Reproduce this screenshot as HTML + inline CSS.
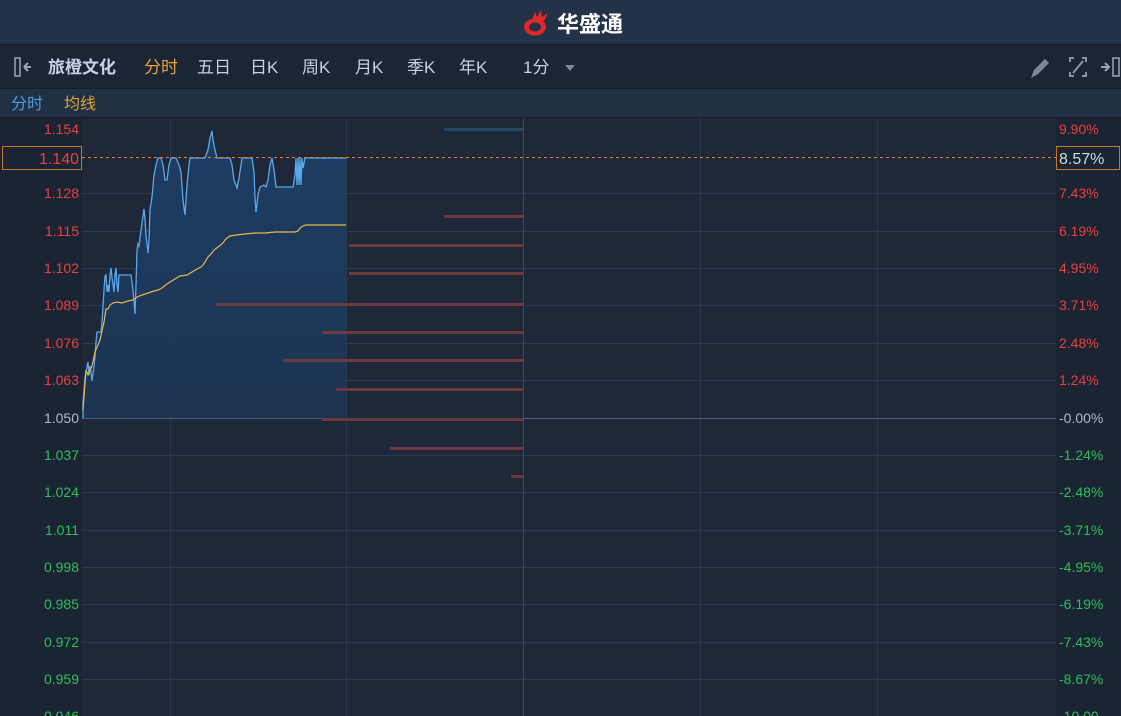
<!DOCTYPE html>
<html><head><meta charset="utf-8"><style>
body{margin:0;width:1121px;height:716px;overflow:hidden;background:#1e2838;font-family:"Liberation Sans","Noto Sans CJK SC",sans-serif;}
</style></head><body>
<svg width="1121" height="716" xmlns="http://www.w3.org/2000/svg" style="position:absolute;left:0;top:0">
<defs><linearGradient id="g" x1="0" y1="0" x2="0" y2="1"><stop offset="0" stop-color="#1d4068"/><stop offset="1" stop-color="#1d3554"/></linearGradient></defs>
<rect x="0" y="0" width="1121" height="44" fill="#243248"/>
<rect x="0" y="44" width="1121" height="1" fill="#151d29"/>
<rect x="0" y="45" width="1121" height="43" fill="#1b2535"/>
<rect x="0" y="88" width="1121" height="1" fill="#151d29"/>
<rect x="0" y="89" width="1121" height="28" fill="#223044"/>
<rect x="0" y="117" width="1121" height="1" fill="#151d29"/>
<rect x="0" y="118" width="82" height="598" fill="#1b2433"/>
<rect x="82" y="118" width="974" height="598" fill="#1e2838"/>
<rect x="1056" y="118" width="65" height="598" fill="#1b2433"/>
<!-- logo -->
<g transform="translate(523,9)">
<path d="M1 18 A11 8.5 0 1 0 23 18 A11 8.5 0 1 0 1 18 Z M6 18 A6 4.5 0 1 1 18 18 A6 4.5 0 1 1 6 18Z" fill="#e0282a" fill-rule="evenodd"/>
<path d="M9 11 L12 3 L14 8 L18 1 L19 8 L25 4 L21 12Z" fill="#e0282a"/>
</g>
<text x="557" y="32" fill="#fff" font-size="22" font-weight="bold">华盛通</text>
<!-- toolbar -->
<rect x="15" y="58" width="5" height="18" fill="none" stroke="#9aa6b6" stroke-width="1.5"/>
<path d="M24 67 L31 67 M24 67 L28 63 M24 67 L28 71" stroke="#9aa6b6" stroke-width="2" fill="none"/>
<g font-size="17" fill="#c8d2e0">
<text x="48" y="73" font-weight="bold" fill="#c6d3e6">旅橙文化</text>
<text x="144" y="73" fill="#e8a33a">分时</text>
<text x="197" y="73">五日</text>
<text x="250" y="73">日K</text>
<text x="302" y="73">周K</text>
<text x="355" y="73">月K</text>
<text x="407" y="73">季K</text>
<text x="459" y="73">年K</text>
<text x="523" y="73">1分</text>
</g>
<path d="M565 65 L575 65 L570 71Z" fill="#7d8898"/>
<path d="M1031 78 L1034 70 L1045 59 L1049 63 L1038 74Z" fill="#7d8898"/>
<g stroke="#8894a4" stroke-width="2" fill="none">
<path d="M1070 62 v-4 h4 M1082 58 h4 v4 M1086 72 v4 h-4 M1074 76 h-4 v-4 M1073 73 L1083 61"/>
</g>
<path d="M1101 67 h7 M1105 63 l4 4 l-4 4" stroke="#9aa6b6" stroke-width="2" fill="none"/>
<rect x="1113" y="58" width="6" height="18" fill="none" stroke="#9aa6b6" stroke-width="1.5"/>
<text x="11" y="109" font-size="16" fill="#4a9de0">分时</text>
<text x="64" y="109" font-size="16" fill="#e0a23a">均线</text>
<!-- grid -->
<g stroke="#2b3a50" stroke-width="1">
<path d="M82 193.5H1056 M82 231.5H1056 M82 268.5H1056 M82 305.5H1056 M82 343.5H1056 M82 380.5H1056 M82 455.5H1056 M82 492.5H1056 M82 530.5H1056 M82 567.5H1056 M82 604.5H1056 M82 642.5H1056 M82 679.5H1056"/>
<path d="M170.5 118V716 M346.5 118V716 M700.5 118V716 M877.5 118V716"/>
</g>
<path d="M523.5 118V716" stroke="#3a4a62"/>
<path d="M82 418.5H1056" stroke="#4a6080"/>
<!-- area -->
<polygon fill="url(#g)" fill-opacity="0.9" points="83,418 83,403 85,378 86,372 88,362 89,375 90,366 91,372 92,381 94,366 95,357 96,342 97,332 101,332 102,322 103,306 104,290 105,276 106,275 107,292 108,285 109,292 110,275 111,268 112,278 113,284 114,292 115,275 116,268 117,285 118,292 119,275 131,275 133,290 134,302 135,314 136,285 137,250 138,244 139,246 140,238 142,223 144,209 145,219 146,236 148,253 149,240 150,210 152,197 154,175 156,165 158,158 161,158 163,165 165,180 167,180 169,165 171,158 176,158 179,165 181,172 183,200 185,215 187,185 189,165 190,158 205,158 208,150 210,138 212,131 213,140 215,150 217,158 230,158 232,165 234,180 237,188 239,178 241,165 242,158 252,158 254,172 255,198 256,212 258,195 260,187 264,185 266,187 268,180 270,165 272,158 274,170 276,187 293,187 295,175 296,158 297,185 298,158 299,185 300,158 301,185 302,158 303,168 305,158 346,158 346,418"/>
<!-- bars -->
<g fill="#6b3a3e">
<rect x="444" y="215" width="79" height="3"/>
<rect x="349" y="244" width="174" height="3"/>
<rect x="349" y="272" width="174" height="3"/>
<rect x="216" y="303" width="307" height="3"/>
<rect x="322" y="331" width="201" height="3"/>
<rect x="283" y="359" width="240" height="3"/>
<rect x="336" y="388" width="187" height="3"/>
<rect x="322" y="418" width="201" height="3"/>
<rect x="390" y="447" width="133" height="3"/>
<rect x="511" y="475" width="12" height="3"/>
</g>
<rect x="444" y="128" width="79" height="3" fill="#2a4866"/>
<!-- lines -->
<polyline fill="none" stroke="#5aa8ec" stroke-width="1.3" points="83,418 83,403 85,378 86,372 88,362 89,375 90,366 91,372 92,381 94,366 95,357 96,342 97,332 101,332 102,322 103,306 104,290 105,276 106,275 107,292 108,285 109,292 110,275 111,268 112,278 113,284 114,292 115,275 116,268 117,285 118,292 119,275 131,275 133,290 134,302 135,314 136,285 137,250 138,244 139,246 140,238 142,223 144,209 145,219 146,236 148,253 149,240 150,210 152,197 154,175 156,165 158,158 161,158 163,165 165,180 167,180 169,165 171,158 176,158 179,165 181,172 183,200 185,215 187,185 189,165 190,158 205,158 208,150 210,138 212,131 213,140 215,150 217,158 230,158 232,165 234,180 237,188 239,178 241,165 242,158 252,158 254,172 255,198 256,212 258,195 260,187 264,185 266,187 268,180 270,165 272,158 274,170 276,187 293,187 295,175 296,158 297,185 298,158 299,185 300,158 301,185 302,158 303,168 305,158 346,158"/>
<polyline fill="none" stroke="#e8b84a" stroke-width="1.2" points="83,410 86,370 88,375 92,366 95,352 100,340 104,322 106,309 108,309 110,305 113,303 117,302 122,303 128,301 133,300 137,297 142,295 148,293 154,291 158,290 162,288 167,284 170,282 175,279 180,276 187,275 192,272 197,269 201,267 203,265 205,262 208,257 211,254 214,250 218,247 222,244 225,240 227,238 230,236 236,235 245,234 255,233 265,233 275,232 285,232 295,232 298,231 300,228 303,226 306,225 346,225"/>
<path d="M82 157.5H1056" stroke="#d8843a" stroke-dasharray="3,3"/>
<!-- boxes -->
<rect x="2.5" y="146.5" width="79" height="23" fill="#1b2433" stroke="#c8772a"/>
<rect x="1056.5" y="146.5" width="63" height="23" fill="#1b2433" stroke="#c8772a"/>
<g font-size="14" text-anchor="end" fill="#e8413f">
<text x="79" y="134">1.154</text>
<text x="79" y="164" font-size="16">1.140</text>
<text x="79" y="198">1.128</text>
<text x="79" y="236">1.115</text>
<text x="79" y="273">1.102</text>
<text x="79" y="310">1.089</text>
<text x="79" y="348">1.076</text>
<text x="79" y="385">1.063</text>
<text x="79" y="423" fill="#b0bac8">1.050</text>
<g fill="#2fbf5a">
<text x="79" y="460">1.037</text>
<text x="79" y="497">1.024</text>
<text x="79" y="535">1.011</text>
<text x="79" y="572">0.998</text>
<text x="79" y="609">0.985</text>
<text x="79" y="647">0.972</text>
<text x="79" y="684">0.959</text>
<text x="79" y="721">0.946</text>
</g>
</g>
<g font-size="14" fill="#e8413f">
<text x="1059" y="134">9.90%</text>
<text x="1059" y="164" font-size="16" fill="#d0d8e4">8.57%</text>
<text x="1059" y="198">7.43%</text>
<text x="1059" y="236">6.19%</text>
<text x="1059" y="273">4.95%</text>
<text x="1059" y="310">3.71%</text>
<text x="1059" y="348">2.48%</text>
<text x="1059" y="385">1.24%</text>
<text x="1059" y="423" fill="#b0bac8">-0.00%</text>
<g fill="#2fbf5a">
<text x="1059" y="460">-1.24%</text>
<text x="1059" y="497">-2.48%</text>
<text x="1059" y="535">-3.71%</text>
<text x="1059" y="572">-4.95%</text>
<text x="1059" y="609">-6.19%</text>
<text x="1059" y="647">-7.43%</text>
<text x="1059" y="684">-8.67%</text>
<text x="1059" y="721">-10.00</text>
</g>
</g>
</svg>
</body></html>
